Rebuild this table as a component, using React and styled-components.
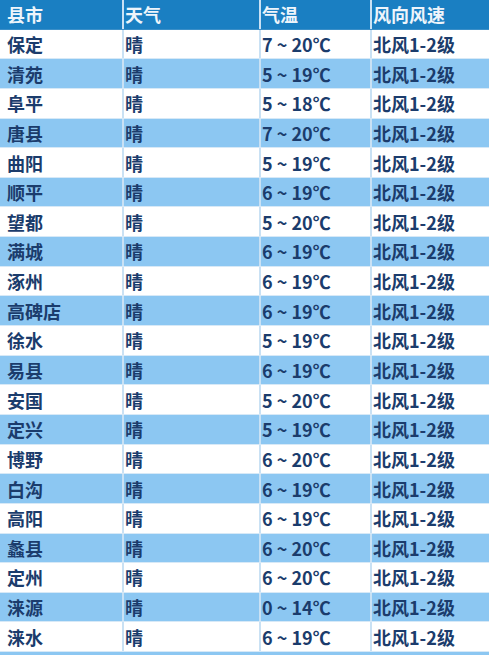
import styled, { createGlobalStyle } from "styled-components"

const GlobalStyle = createGlobalStyle`
    html, body {
        margin: 0;
        padding: 0;
        background: #ffffff;
    }
    body {
        font-family: "Noto Sans CJK SC", "Noto Sans", sans-serif;
    }
`

const rows = [
    ["保定", "晴", "7 ~ 20℃", "北风1-2级"],
    ["清苑", "晴", "5 ~ 19℃", "北风1-2级"],
    ["阜平", "晴", "5 ~ 18℃", "北风1-2级"],
    ["唐县", "晴", "7 ~ 20℃", "北风1-2级"],
    ["曲阳", "晴", "5 ~ 19℃", "北风1-2级"],
    ["顺平", "晴", "6 ~ 19℃", "北风1-2级"],
    ["望都", "晴", "5 ~ 20℃", "北风1-2级"],
    ["满城", "晴", "6 ~ 19℃", "北风1-2级"],
    ["涿州", "晴", "6 ~ 19℃", "北风1-2级"],
    ["高碑店", "晴", "6 ~ 19℃", "北风1-2级"],
    ["徐水", "晴", "5 ~ 19℃", "北风1-2级"],
    ["易县", "晴", "6 ~ 19℃", "北风1-2级"],
    ["安国", "晴", "5 ~ 20℃", "北风1-2级"],
    ["定兴", "晴", "5 ~ 19℃", "北风1-2级"],
    ["博野", "晴", "6 ~ 20℃", "北风1-2级"],
    ["白沟", "晴", "6 ~ 19℃", "北风1-2级"],
    ["高阳", "晴", "6 ~ 19℃", "北风1-2级"],
    ["蠡县", "晴", "6 ~ 20℃", "北风1-2级"],
    ["定州", "晴", "6 ~ 20℃", "北风1-2级"],
    ["涞源", "晴", "0 ~ 14℃", "北风1-2级"],
    ["涞水", "晴", "6 ~ 19℃", "北风1-2级"],
]

const App = () => {
    return (
        <>
            <GlobalStyle />
            <Table>
                <Row $head>
                    <Cell $first>县市</Cell>
                    <Cell>天气</Cell>
                    <Cell>气温</Cell>
                    <Cell>风向风速</Cell>
                </Row>
                {rows.map((r, i) => (
                    <Row key={r[0]} $alt={i % 2 === 1}>
                        <Cell $first>{r[0]}</Cell>
                        <Cell>{r[1]}</Cell>
                        <Cell>{r[2]}</Cell>
                        <Cell>{r[3]}</Cell>
                    </Row>
                ))}
                <Footer />
            </Table>
        </>
    )
}

export default App

const Table = styled.div`
    width: 489px;
    display: flex;
    flex-direction: column;
`

const Row = styled.div`
    display: grid;
    grid-template-columns: 122px 137px 111px 119px;
    height: 29.65px;
    background: ${(p) => (p.$head ? "#1a7fc2" : p.$alt ? "#8cc7f2" : "#ffffff")};
    color: ${(p) => (p.$head ? "#eef5fb" : "#1b3c6c")};
    border-bottom: 1px solid ${(p) => (p.$head ? "#3b8fc8" : "#d7e9f7")};
    box-sizing: border-box;
`

const Cell = styled.div`
    display: flex;
    align-items: center;
    padding-left: ${(p) => (p.$first ? "7px" : "1px")};
    font-size: 18px;
    font-weight: 700;
    line-height: 1;
    white-space: nowrap;
    border-left: ${(p) => (p.$first ? "none" : "2px solid #c9e1f4")};
    box-sizing: border-box;
`

const Footer = styled.div`
    height: 4px;
    background: #8cc7f2;
`
